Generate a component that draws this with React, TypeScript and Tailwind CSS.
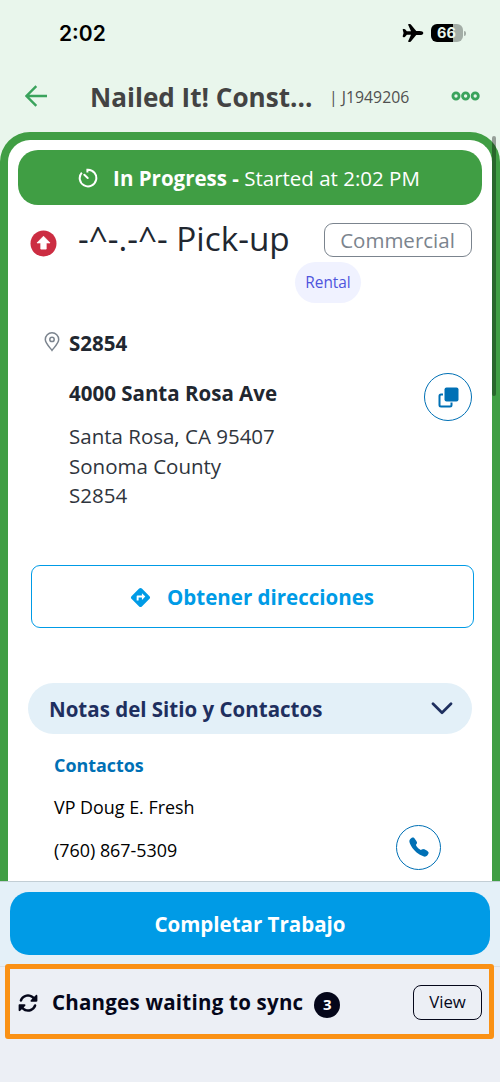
import { useState } from "react";
import { FaRotate } from "react-icons/fa6";
import { IoAirplane, IoCall } from "react-icons/io5";
import { MdDirections } from "react-icons/md";

const address = ["Santa Rosa, CA 95407", "Sonoma County", "S2854"];

function StatusBar() {
  return (
    <div className="flex h-[66px] shrink-0 items-center justify-between pl-[59px] pr-[34px] font-[Inter,sans-serif]">
      <span className="text-[21px] font-semibold leading-none text-black">2:02</span>
      <div className="flex items-center">
        <IoAirplane className="mr-[7px] h-[22px] w-[22px] text-black" />
        <div className="flex h-[18px] w-8 items-center justify-center rounded-[6px] bg-[linear-gradient(90deg,#000_68%,#a3ada6_68%)] pr-px text-[14.5px] font-bold leading-none text-[#e9f6ec]">
          66
        </div>
        <div className="ml-px h-[5px] w-[2px] rounded-r-full bg-[#a3ada6]" />
      </div>
    </div>
  );
}

function Header() {
  return (
    <header className="flex h-[66px] shrink-0 items-center pb-1 pl-[25px]">
      <button aria-label="Volver" className="mr-[43px] mt-[-2px]">
        <svg width="22" height="22" viewBox="0 0 22 22" fill="none" stroke="#3aa35c" strokeWidth="2.4">
          <path d="M22 11H1.8M11.3 1.2 1.5 11l9.8 9.8" />
        </svg>
      </button>
      <h1 className="w-[239px] whitespace-nowrap text-[26.1px] font-bold leading-none text-[#434343]">
        Nailed It! Const...
      </h1>
      <span className="w-[122px] whitespace-nowrap pt-px text-[15.8px] leading-none text-[#505050]">
        | J1949206
      </span>
      <button aria-label="Opciones" className="mt-[-2px]">
        <svg width="29" height="10" viewBox="0 0 29 10" fill="none" stroke="#3aa35c" strokeWidth="2.8">
          <circle cx="5" cy="5" r="3.1" />
          <circle cx="14.6" cy="5" r="3.1" />
          <circle cx="24.2" cy="5" r="3.1" />
        </svg>
      </button>
    </header>
  );
}

function JobTitle() {
  return (
    <div className="flex h-[97px] items-start pl-[22px] pt-[18px]">
      <svg className="mt-[7px] shrink-0" width="27" height="27" viewBox="0 0 27 27">
        <circle cx="13.5" cy="13.5" r="13" fill="#cc2d42" />
        <path
          d="M13.5 6.2 20 12.9h-3.8v6.2h-5.4v-6.2H7z"
          fill="#fff"
          stroke="#fff"
          strokeWidth="0.8"
          strokeLinejoin="round"
        />
      </svg>
      <h2 className="ml-[21px] mt-[-7px] w-[217px] whitespace-nowrap text-[33.3px] leading-[44px] text-[#212730]">
        -^-.-^- Pick-up
      </h2>
      <div>
        <div className="ml-[29px] flex h-[34px] w-[148px] items-center justify-center whitespace-nowrap rounded-[9px] border border-[#7b848e] pr-px text-[20.5px] text-[#7b848e]">
          Commercial
        </div>
        <div className="mt-[5px] flex h-[41px] w-[66px] items-center justify-center rounded-full bg-[#f0f2ff] text-[15.4px] text-[#4f55dd]">
          Rental
        </div>
      </div>
    </div>
  );
}

function SiteAddress() {
  return (
    <section className="pl-[36px] pr-[20px]">
      <div className="flex h-[50px] items-center">
        <svg className="mt-[-4px]" width="16" height="20" viewBox="0 0 16 20" fill="none" stroke="#7b848e" strokeWidth="1.5">
          <path d="M8 18.4C5.6 15.2 1.3 11 1.3 7.5a6.7 6.7 0 0 1 13.4 0C14.7 11 10.4 15.2 8 18.4z" />
          <circle cx="8" cy="7.4" r="2.2" />
        </svg>
        <span className="ml-[9px] mt-[-2px] text-[20.5px] font-bold text-[#212730]">S2854</span>
      </div>
      <div className="flex pl-[25px]">
        <div className="flex-1 text-[20.5px] text-[#2f353d]">
          <p className="h-[53px] pt-[8px] text-[20.5px] font-bold leading-[32px] text-[#212730]">
            4000 Santa Rosa Ave
          </p>
          {address.map((line) => (
            <p key={line} className="leading-[29.5px]">
              {line}
            </p>
          ))}
        </div>
        <button
          aria-label="Copiar"
          className="mt-[4px] flex h-12 w-12 items-center justify-center rounded-full border-[1.5px] border-[#0070b5]"
        >
          <svg width="21" height="21" viewBox="0 0 21 21">
            <rect x="6.5" y="0.5" width="14" height="14" rx="2" fill="#0070b5" />
            <path
              d="M5 7.5H3A1.5 1.5 0 0 0 1.5 9v9A1.5 1.5 0 0 0 3 19.5h9a1.5 1.5 0 0 0 1.5-1.5v-2.5"
              fill="none"
              stroke="#0070b5"
              strokeWidth="2"
            />
          </svg>
        </button>
      </div>
    </section>
  );
}

function Contacts() {
  const [open, setOpen] = useState(true);

  return (
    <section className="mt-[55px] pl-5 pr-5">
      <button
        onClick={() => setOpen(!open)}
        className="flex h-[51px] w-full items-center justify-between rounded-full bg-[#e3f0f8] pl-[21px] pr-[19px] text-[20.5px] font-bold text-[#1e2f5f]"
      >
        <span className="pt-[2px]">Notas del Sitio y Contactos</span>
        <svg width="22" height="13" viewBox="0 0 22 13" fill="none" stroke="#1e2f5f" strokeWidth="2.7">
          <path d="m2 1.8 9 9 9-9" strokeLinecap="round" strokeLinejoin="round" />
        </svg>
      </button>
      {open && (
        <div className="pl-[26px] text-black">
          <h3 className="flex h-[61px] items-center pt-[2px] text-[17.9px] font-bold text-[#0070b5]">Contactos</h3>
          <p className="text-[17.9px] leading-6">VP Doug E. Fresh</p>
          <div className="mt-1.5 flex items-center justify-between pr-[31px]">
            <p className="pt-[7px] text-[17.9px]">(760) 867-5309</p>
            <button
              aria-label="Llamar"
              className="flex h-[45px] w-[45px] items-center justify-center rounded-full border-[1.5px] border-[#0070b5] text-[#0070b5]"
            >
              <IoCall className="h-[22px] w-[22px]" />
            </button>
          </div>
        </div>
      )}
    </section>
  );
}

function SyncBar() {
  return (
    <div className="relative z-10 mx-[5px] mt-[-3px] flex h-[75px] w-[489px] shrink-0 items-center rounded-[3px] border-[5px] border-[#fa9115] bg-[#eceff5] pl-[8px] pr-[7px] pt-[3px] text-[#05071a]">
      <FaRotate className="h-5 w-5" />
      <span className="ml-[14px] mt-[-1px] whitespace-nowrap text-[20.5px] font-bold tracking-[0.23px]">
        Changes waiting to sync
      </span>
      <span className="ml-[11px] mt-[3px] flex h-[26px] w-[26px] items-center justify-center rounded-full bg-[#05071a] text-[15px] font-bold text-white">
        3
      </span>
      <button className="ml-auto mt-[-1px] flex h-[35px] w-[69px] items-center justify-center rounded-lg border-[1.5px] border-[#05071a] pb-px text-[16.8px]">
        View
      </button>
    </div>
  );
}

export default function App() {
  return (
    <div className="relative flex h-[1082px] w-[500px] flex-col overflow-hidden bg-[#e9f6ec] font-['Open_Sans',sans-serif]">
      <StatusBar />
      <Header />

      <main className="h-[749px] shrink-0 overflow-hidden rounded-t-[30px] border-x-8 border-t-8 border-[#409e44] bg-white">
        <div className="mx-[10px] mt-[10px] flex h-[55px] items-center justify-center rounded-[20px] bg-[#409e44] pr-[2px] pt-px text-[20.5px] text-white">
          <svg className="mr-[15px]" width="20" height="20" viewBox="0 0 20 20" fill="none" stroke="#fff" strokeWidth="2">
            <path d="M9.4 4.6V1.8h.6a8.3 8.3 0 1 1-6.2 2.8" />
            <path d="m6.3 6.8 3.4 3.2" strokeLinecap="round" />
          </svg>
          <b className="whitespace-pre">In Progress - </b>
          <span>Started at 2:02 PM</span>
        </div>
        <JobTitle />
        <div className="h-[17px]" />
        <SiteAddress />
        <button className="ml-[23px] mt-[54px] flex h-[63px] w-[443px] items-center justify-center rounded-[9px] border-[1.5px] border-[#009be6] pr-[2px] pt-[3px] text-[20.5px] font-bold text-[#009be6]">
          <MdDirections className="mr-[15px] mt-[-1px] h-[23px] w-[23px]" />
          Obtener direcciones
        </button>
        <Contacts />
      </main>

      <footer className="h-[85px] shrink-0 border-t border-[#c2ced5] bg-[#e4f0f8] px-[10px] pt-[10px]">
        <button className="h-[63px] w-full rounded-[19px] bg-[#009be6] pt-px text-[20.5px] font-bold text-white">
          Completar Trabajo
        </button>
      </footer>
      <div className="flex-1 border-t border-[#d9dfe5] bg-[#eceff5]">
        <SyncBar />
      </div>

      {/* scroll thumb */}
      <div className="absolute right-[4px] top-[136px] h-[260px] w-1 rounded-full bg-black/35" />
    </div>
  );
}
